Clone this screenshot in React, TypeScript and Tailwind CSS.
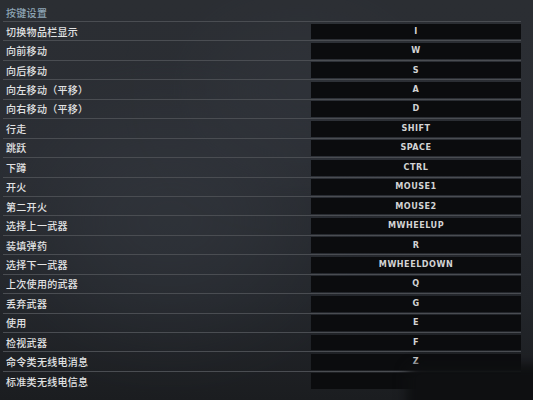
import React from "react";

type Binding = { action: string; key: string };

const bindings: Binding[] = [
  { action: "切换物品栏显示", key: "I" },
  { action: "向前移动", key: "W" },
  { action: "向后移动", key: "S" },
  { action: "向左移动（平移）", key: "A" },
  { action: "向右移动（平移）", key: "D" },
  { action: "行走", key: "SHIFT" },
  { action: "跳跃", key: "SPACE" },
  { action: "下蹲", key: "CTRL" },
  { action: "开火", key: "MOUSE1" },
  { action: "第二开火", key: "MOUSE2" },
  { action: "选择上一武器", key: "MWHEELUP" },
  { action: "装填弹药", key: "R" },
  { action: "选择下一武器", key: "MWHEELDOWN" },
  { action: "上次使用的武器", key: "Q" },
  { action: "丢弃武器", key: "G" },
  { action: "使用", key: "E" },
  { action: "检视武器", key: "F" },
  { action: "命令类无线电消息", key: "Z" },
  { action: "标准类无线电信息", key: "" },
];

const cjk = { fontFamily: '"Noto Sans CJK SC", "Noto Sans", sans-serif' };
const keyFont = {
  fontFamily: '"DejaVu Sans Condensed", "Liberation Sans Narrow", "DejaVu Sans", sans-serif',
};

function Row({ b }: { b: Binding }) {
  return (
    <div className="flex h-[19.45px] border-t border-[#4a4d52]">
      <div
        className="flex-1 flex items-center pl-[3px] text-[10px] font-medium tracking-[0.3px] text-[#e2e3e4]"
        style={cjk}
      >
        {b.action}
      </div>
      <div
        className="w-[210px] mt-[1.5px] mb-[1px] bg-[#0b0c0e] flex items-center justify-center text-[9px] font-bold tracking-[0.5px] text-[#d2d3d4]"
        style={keyFont}
      >
        {b.key}
      </div>
    </div>
  );
}

export default function App() {
  return (
    <div className="relative w-[533px] h-[400px] overflow-hidden bg-[linear-gradient(180deg,#2b2e33_0%,#2a2d33_40%,#23262b_75%,#1b1d20_100%)]">
      {/* smoky highlights in the backdrop */}
      <div className="absolute left-[40px] top-[120px] w-[260px] h-[200px] rounded-full bg-[#3a3f47] opacity-40 blur-[50px]" />
      <div className="absolute left-[200px] top-[20px] w-[200px] h-[140px] rounded-full bg-[#353940] opacity-40 blur-[40px]" />

      <div className="relative pl-[3px] pr-[12px]">
        <div
          className="h-[21px] flex items-center pt-[3px] pl-[3px] text-[10px] font-medium tracking-[0.3px] text-[#8ea5b6]"
          style={cjk}
        >
          按键设置
        </div>
        {bindings.map((b) => (
          <Row key={b.action} b={b} />
        ))}
      </div>

      {/* dark smudge over the lower right corner */}
      <div className="absolute left-[406px] top-[364px] w-[180px] h-[60px] rounded-tl-[14px] bg-[#0e0f11] blur-[6px]" />
    </div>
  );
}
